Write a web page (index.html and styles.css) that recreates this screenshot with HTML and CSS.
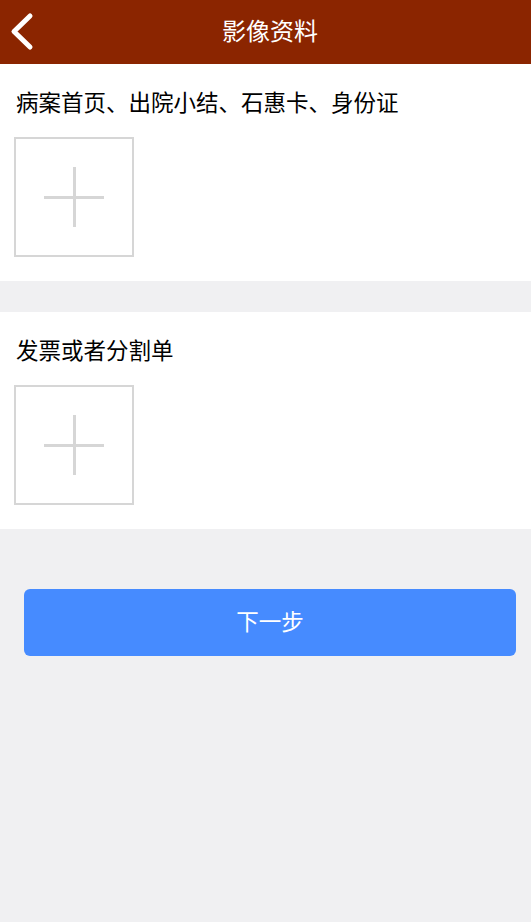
FILE: index.html
```html
<!DOCTYPE html>
<html lang="zh-CN">
<head>
    <meta charset="UTF-8">
    <meta name="viewport" content="width=device-width, initial-scale=1.0">
    <title>影像资料</title>
    <link rel="stylesheet" href="styles.css">
</head>
<body>
    <header class="topbar">
        <a class="back" href="#">
            <svg width="40" height="64" viewBox="0 0 40 64">
                <polyline points="30,16 14,31.5 30,47" fill="none" stroke="#fff" stroke-width="5" stroke-linecap="round" stroke-linejoin="round"/>
            </svg>
        </a>
        <h1 class="title">影像资料</h1>
    </header>

    <section class="block">
        <div class="block-title">病案首页、出院小结、石惠卡、身份证</div>
        <div class="upload"><span class="plus"></span></div>
    </section>

    <section class="block second">
        <div class="block-title">发票或者分割单</div>
        <div class="upload"><span class="plus"></span></div>
    </section>

    <div class="actions">
        <button class="next">下一步</button>
    </div>
</body>
</html>
```

FILE: styles.css
```css
* {
    margin: 0;
    padding: 0;
    box-sizing: border-box;
}
body {
    background: #f0f0f2;
    font-family: 'Noto Sans CJK SC', 'Noto Sans', sans-serif;
    color: #000;
    min-height: 100vh;
}
.topbar {
    position: relative;
    height: 64px;
    background: #8b2500;
    display: flex;
    align-items: center;
    justify-content: center;
    padding: 0 0 4px 9px;
}
.back {
    position: absolute;
    left: 0;
    top: 0;
    display: block;
    height: 64px;
}
.title {
    color: #fff;
    font-size: 24px;
    font-weight: normal;
    line-height: 60px;
}
.block {
    background: #fff;
    padding: 22px 0 24px 16px;
}
.block.second {
    margin-top: 31px;
}
.block-title {
    font-size: 22.5px;
    line-height: 30px;
    margin-bottom: 21px;
}
.upload {
    position: relative;
    width: 120px;
    height: 120px;
    margin-left: -2px;
    border: 2px solid #d6d6d6;
}
.plus {
    position: absolute;
    left: 28px;
    top: 28px;
    width: 60px;
    height: 60px;
}
.plus::before,
.plus::after {
    content: '';
    position: absolute;
    background: #d6d6d6;
}
.plus::before {
    left: 0;
    top: 28.5px;
    width: 60px;
    height: 3px;
}
.plus::after {
    left: 28.5px;
    top: 0;
    width: 3px;
    height: 60px;
}
.actions {
    padding: 60px 15px 0 24px;
}
.next {
    display: block;
    width: 100%;
    height: 67px;
    padding-bottom: 6px;
    border: none;
    border-radius: 6px;
    background: #468bff;
    color: #fff;
    font-family: inherit;
    font-size: 22.5px;
}
```
